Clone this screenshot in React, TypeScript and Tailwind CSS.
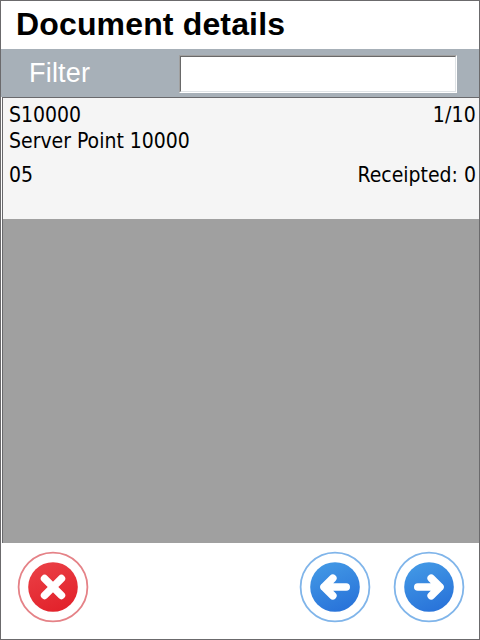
import type { ReactNode } from "react";

type RoundButtonProps = {
  label: string;
  ring: string;
  from: string;
  to: string;
  id: string;
  children: ReactNode;
};

function RoundButton({ label, ring, from, to, id, children }: RoundButtonProps) {
  return (
    <button type="button" aria-label={label} className="block size-[72px] shrink-0">
      <svg viewBox="0 0 72 72" className="size-full" fill="none">
        <defs>
          <linearGradient id={id} x1="0.3" y1="0" x2="0.7" y2="1">
            <stop stopColor={from} />
            <stop offset="1" stopColor={to} />
          </linearGradient>
        </defs>
        <circle cx="36" cy="36" r="34.4" stroke={ring} strokeWidth="1.8" />
        <circle cx="36" cy="36" r="24.8" fill={`url(#${id})`} />
        <g stroke="#fff" strokeWidth="7.6" strokeLinecap="round" strokeLinejoin="round">
          {children}
        </g>
      </svg>
    </button>
  );
}

export default function App() {
  return (
    <div className="flex h-[640px] w-[480px] flex-col border border-[#6b6a6c] bg-white font-['Liberation_Sans',Arial,sans-serif]">
      <header className="h-12 pl-[15px]">
        <h1 className="text-[32px] leading-[47px] font-bold tracking-[0.15px] whitespace-nowrap text-black">
          Document details
        </h1>
      </header>
      <div className="flex h-12 items-start bg-[#a7b0b8]">
        <label htmlFor="filter" className="w-[178px] pl-7 text-[27px] leading-[48px] tracking-[0.2px] text-white">
          Filter
        </label>
        <div className="mt-1.5 h-[38px] w-[278px] border border-t-[#a0a0a0] border-r-white border-b-white border-l-[#a0a0a0]">
          <input
            id="filter"
            className="block h-full w-full border border-t-[#696969] border-r-[#dfe3e6] border-b-[#dfe3e6] border-l-[#696969] bg-white px-1 outline-none"
          />
        </div>
      </div>
      <main className="ml-px h-[446px] border-t border-l border-[#69696c] bg-[#a0a0a0]">
        <div className="h-[121px] bg-[#f5f5f5] pt-1 pr-[3px] pl-1.5 font-['DejaVu_Sans_Condensed','DejaVu_Sans',Tahoma,sans-serif] text-[21px] leading-[26px] text-black [font-stretch:condensed]">
          <div className="flex justify-between">
            <span>S10000</span>
            <span className="tracking-[0.2px]">1/10</span>
          </div>
          <div>Server Point 10000</div>
          <div className="mt-2 flex justify-between">
            <span>05</span>
            <span>Receipted: 0</span>
          </div>
        </div>
      </main>
      <footer className="flex flex-1 items-start pt-2 pr-3.5 pl-4">
        <RoundButton label="Cancel" id="cancel" ring="#e58287" from="#ea3f45" to="#e2212a">
          <path d="M27.6 27.6 44.4 44.4M44.4 27.6 27.6 44.4" />
        </RoundButton>
        <div className="ml-auto flex gap-[22px]">
          <RoundButton label="Previous" id="previous" ring="#80b5ea" from="#4298e5" to="#2872d9">
            <path d="M47.2 36H25M33.8 27.2 25 36 33.8 44.8" />
          </RoundButton>
          <RoundButton label="Next" id="next" ring="#80b5ea" from="#4298e5" to="#2872d9">
            <path d="M24.8 36H47M38.2 27.2 47 36 38.2 44.8" />
          </RoundButton>
        </div>
      </footer>
    </div>
  );
}
